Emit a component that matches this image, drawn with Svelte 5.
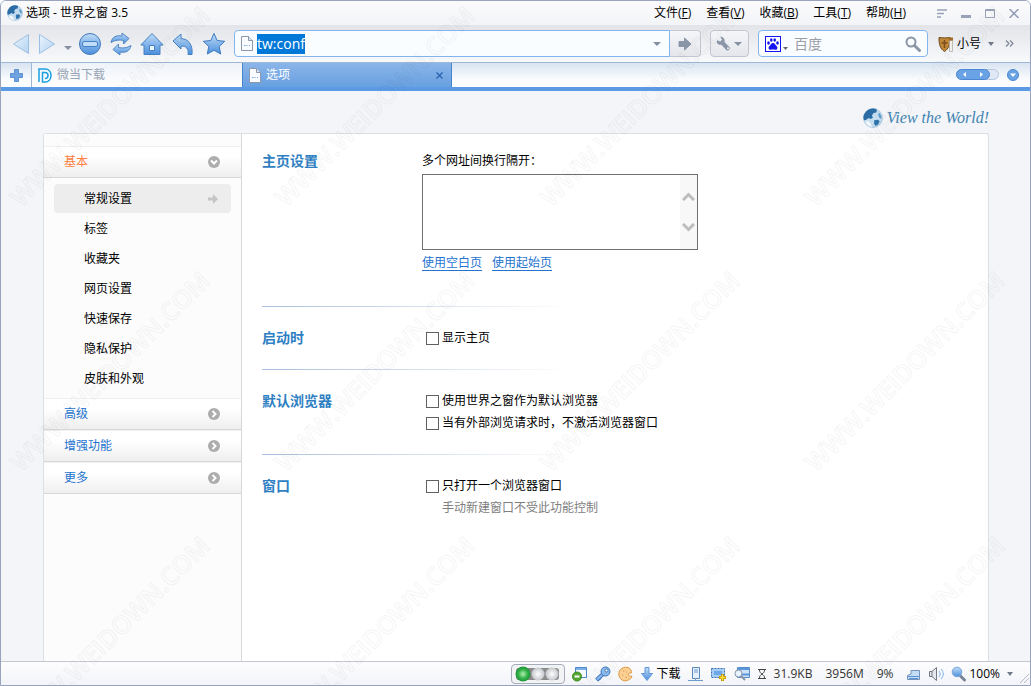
<script>
  import { onMount } from 'svelte';

  const menus = [
    ['文件', 'F'],
    ['查看', 'V'],
    ['收藏', 'B'],
    ['工具', 'T'],
    ['帮助', 'H']
  ];

  const pages = ['常规设置', '标签', '收藏夹', '网页设置', '快速保存', '隐私保护', '皮肤和外观'];
  const groups = ['高级', '增强功能', '更多'];

  let current = $state('常规设置');
  let url = $state('tw:conf');
  let keyword = $state('');
  let homepages = $state('');
  let showHome = $state(false);
  let isDefault = $state(false);
  let keepInactive = $state(false);
  let singleWindow = $state(false);

  let address;

  onMount(() => {
    address.focus();
    address.select();
  });
</script>

{#snippet globe(size)}
  <svg width={size} height={size} viewBox="0 0 18 18" aria-hidden="true">
    <circle cx="9" cy="9" r="8.500" fill="#c3dcee" stroke="#8db4d2" stroke-width=".5" />
    <path d="M1.500 5C4 0 10-.5 12.500 1.500L12 4l-2.500.5L8 7l1 1.500-2 1.500-2-1-2 1.500L.8 11C0 8 .5 6.500 1.500 5z" fill="#2c6ca5" />
    <path d="M10 11l3.500-.5 1.500 1.500-1.500 3-2.500 1-1-2z" fill="#2f74ad" />
    <path d="M14.500 4l2 3v3l-2-1.500-.8-2.500z" fill="#5e9bc8" />
    <path d="M2 12c1 3 3 4.500 6 5l-1-3-2-2z" fill="#f4f9fd" />
  </svg>
{/snippet}

{#snippet page()}
  <svg width="12" height="15" viewBox="0 0 12 15" aria-hidden="true">
    <path d="M.5.5h7l4 4v10H.5z" fill="#fafcff" stroke="#8b97ad" />
    <path d="M7.500.5v4h4" fill="#dde5f0" stroke="#8b97ad" />
    <path d="M3 9.500h1.500M5.500 9.500h1M8 9.500h1" stroke="#6f9fd8" />
  </svg>
{/snippet}

{#snippet caret()}
  <svg width="8" height="4" viewBox="0 0 8 4" aria-hidden="true"><path d="M0 0h8L4 4z" fill="#8590a3" /></svg>
{/snippet}

<div class="window">
  <svg class="defs" width="0" height="0" aria-hidden="true">
    <defs>
      <linearGradient id="blue" x1="0" y1="0" x2="0" y2="1">
        <stop offset="0" stop-color="#bfdcf8" />
        <stop offset="1" stop-color="#4b8fdc" />
      </linearGradient>
      <linearGradient id="pale" x1="0" y1="0" x2="1" y2="1">
        <stop offset="0" stop-color="#eaf4fd" />
        <stop offset="1" stop-color="#b3d3f1" />
      </linearGradient>
      <radialGradient id="green">
        <stop offset="0" stop-color="#b0f0ae" />
        <stop offset="0.600" stop-color="#35b34a" />
        <stop offset="1" stop-color="#1f9438" />
      </radialGradient>
      <radialGradient id="silver">
        <stop offset="0" stop-color="#fff" />
        <stop offset="1" stop-color="#c3c6cc" />
      </radialGradient>
    </defs>
  </svg>

  <header class="titlebar">
    {@render globe(16)}
    <span class="title">选项 - 世界之窗 3.5</span>
    <nav class="menus">
      {#each menus as [name, key]}
        <button>{name}(<u>{key}</u>)</button>
      {/each}
    </nav>
    <div class="controls">
      <button aria-label="菜单">
        <svg width="10" height="9" viewBox="0 0 10 9"><path d="M0 1h10M0 4.500h7M0 8h4" stroke="#98a3b8" stroke-width="1.500" /></svg>
      </button>
      <button aria-label="最小化">
        <svg width="10" height="9" viewBox="0 0 10 9"><path d="M0 7.500h10" stroke="#98a3b8" stroke-width="3" /></svg>
      </button>
      <button aria-label="最大化">
        <svg width="10" height="9" viewBox="0 0 10 9"><path d="M.5.5h9v8h-9zM.5 1.500h9" fill="none" stroke="#98a3b8" /></svg>
      </button>
      <button aria-label="关闭">
        <svg width="10" height="9" viewBox="0 0 10 9"><path d="M.5 0l9 9M9.500 0l-9 9" stroke="#8f9bb2" stroke-width="1.500" /></svg>
      </button>
    </div>
  </header>

  <div class="toolbar">
    <div class="history">
      <button aria-label="后退">
        <svg width="18" height="22" viewBox="0 0 18 22"><path d="M16.500 1.500v19L1.500 11z" fill="url(#pale)" stroke="#9bbfe2" stroke-linejoin="round" /></svg>
      </button>
      <button aria-label="前进">
        <svg width="18" height="22" viewBox="0 0 18 22"><path d="M1.500 1.500v19l15-9.500z" fill="url(#pale)" stroke="#9bbfe2" stroke-linejoin="round" /></svg>
      </button>
      <button class="recent" aria-label="历史">{@render caret()}</button>
    </div>
    <div class="actions">
      <button aria-label="停止">
        <svg width="24" height="24" viewBox="0 0 24 24">
          <circle cx="12" cy="12" r="10.500" fill="url(#blue)" stroke="#4078b8" />
          <rect x="4.500" y="9.500" width="15" height="5" rx="1.500" fill="#bfdcf8" stroke="#4580c4" />
        </svg>
      </button>
      <button aria-label="刷新">
        <svg width="24" height="24" viewBox="0 0 24 24" fill="url(#blue)" stroke="#5187c4" stroke-linejoin="round">
          <path d="M2 10.500C3 4.500 8 3 13 4V1l7 5.500-5.500 5.500V8.500C10 7.500 6 8 2 10.500z" />
          <path d="M22 13.500c-1 6-6 7.500-11 6.500v3l-7-5.500L9.500 12v3.500c4.500 1 8.500.5 12.500-2z" />
        </svg>
      </button>
      <button aria-label="主页">
        <svg width="24" height="24" viewBox="0 0 24 24" fill="url(#blue)" stroke="#4580c4" stroke-linejoin="round">
          <path d="M12 1.500L.8 13H4v9.500h16V13h3.200z" />
          <rect x="9.500" y="13.500" width="5" height="5" fill="#eff7ff" />
        </svg>
      </button>
      <button aria-label="撤销">
        <svg width="24" height="24" viewBox="0 0 24 24">
          <path d="M2 9l8-7v4.500c8 .5 12 7 11 16h-4c1-6-2-8.500-7-8.500v3z" fill="url(#blue)" stroke="#4580c4" stroke-linejoin="round" />
        </svg>
      </button>
      <button aria-label="收藏">
        <svg width="24" height="24" viewBox="0 0 24 24">
          <path d="M12 1.500l3.200 7 7.500.8-5.500 5.200 1.500 7.500L12 18.300 5.300 22l1.500-7.500L1.300 9.300l7.500-.8z" fill="url(#blue)" stroke="#3f7ac0" stroke-linejoin="round" />
        </svg>
      </button>
    </div>

    <div class="address">
      {@render page()}
      <input type="text" aria-label="地址" bind:value={url} bind:this={address} spellcheck="false" />
      <button aria-label="地址列表">{@render caret()}</button>
    </div>
    <button class="go" aria-label="转到">
      <svg width="14" height="14" viewBox="0 0 14 14"><path d="M1 4.500h5.500V1L13 7l-6.500 6V9.500H1z" fill="#8b95a8" stroke="#8b95a8" stroke-linejoin="round" /></svg>
    </button>
    <button class="tools" aria-label="工具">
      <svg width="15" height="15" viewBox="0 0 15 15">
        <path d="M4.200.8L6 3.600 4.300 5.400 1 4.200C0 7.200 2.300 9.600 5.400 8.800l5 5.400c1.800 1 4-1 3.300-2.900L8.500 6C9.300 3 7.200.5 4.200.8z" fill="#8b95a8" />
        <circle cx="12" cy="12.300" r="1" fill="#f0f1f4" />
      </svg>
      {@render caret()}
    </button>

    <div class="search">
      <svg width="16" height="16" viewBox="0 0 16 16" aria-hidden="true">
        <rect x=".5" y=".5" width="15" height="15" fill="#fff" stroke="#1414f0" />
        <g fill="#1414f0">
          <ellipse cx="3.500" cy="7" rx="1.300" ry="1.800" />
          <ellipse cx="6.300" cy="4" rx="1.300" ry="1.800" />
          <ellipse cx="9.700" cy="4" rx="1.300" ry="1.800" />
          <ellipse cx="12.500" cy="7" rx="1.300" ry="1.800" />
          <path d="M8 7c2 0 2.300 2 3.700 3.200 1.500 1.500.5 3.600-1.200 3.500-1.500-.2-3.500-.2-5 0-1.800 0-2.700-2-1.200-3.500C5.700 9 6 7 8 7z" />
        </g>
      </svg>
      <svg class="engine" width="5" height="3" viewBox="0 0 5 3" aria-hidden="true"><path d="M0 0h5L2.500 3z" fill="#667" /></svg>
      <input type="text" aria-label="搜索" placeholder="百度" bind:value={keyword} />
      <button aria-label="搜索">
        <svg width="16" height="16" viewBox="0 0 16 16"><circle cx="6" cy="6" r="4.500" fill="none" stroke="#8b95a8" stroke-width="2" /><path d="M9.500 9.500l5 5" stroke="#8b95a8" stroke-width="3" stroke-linecap="round" /></svg>
      </button>
    </div>

    <button class="alt">
      <svg width="16" height="18" viewBox="0 0 16 18" aria-hidden="true">
        <path d="M1 2.500c4 .5 7 .5 11 0 0 7-1 11-5.500 14C2 13.500 1 9.500 1 2.500z" fill="#c08838" stroke="#6d4a1e" />
        <path d="M6.500 5v8M3.500 8h6" stroke="#7a4e18" stroke-width="1.500" />
        <path d="M11.500 5.500h3v11h-3z" fill="#f1efea" stroke="#a8a69e" stroke-width=".7" />
        <path d="M10 2.500h5v3h-3.500z" fill="#a06a28" />
      </svg>
      <span>小号</span>
      <svg width="6" height="4" viewBox="0 0 6 4" aria-hidden="true"><path d="M0 0h6L3 4z" fill="#70788a" /></svg>
    </button>
    <button class="more" aria-label="更多">
      <svg width="9" height="7" viewBox="0 0 9 7"><path d="M1 .5l3 3-3 3M5 .5l3 3-3 3" fill="none" stroke="#7d8698" stroke-width="1.200" /></svg>
    </button>
  </div>

  <div class="tabs">
    <button class="new-tab" aria-label="新建标签">
      <svg width="13" height="13" viewBox="0 0 13 13"><path d="M4.500.5h4v4h4v4h-4v4h-4v-4h-4v-4h4z" fill="#6fa3e0" stroke="#5b90d2" stroke-linejoin="round" /></svg>
    </button>
    <div class="tab">
      <button class="tab-name">
        <svg width="14" height="15" viewBox="0 0 14 15" aria-hidden="true"><path d="M1 14V1h6c8 0 8 13 0 13H4.500V4.500H7c4 0 4 6 0 6" fill="none" stroke="#1ba0e0" stroke-width="1.500" /></svg>
        <span>微当下载</span>
      </button>
    </div>
    <div class="tab active">
      <button class="tab-name">
        {@render page()}
        <span>选项</span>
      </button>
      <button class="close" aria-label="关闭标签">
        <svg width="7" height="7" viewBox="0 0 7 7"><path d="M.5.5l6 6M6.500.5l-6 6" stroke="#2b62b0" stroke-width="1.300" /></svg>
      </button>
    </div>
    <div class="tab-tools">
      <button aria-label="滚动标签">
        <svg width="43" height="12" viewBox="0 0 43 12">
          <rect x=".5" y=".5" width="42" height="10" rx="5" fill="#dfe8f4" stroke="#b4c6de" />
          <rect x=".5" y=".5" width="33" height="10" rx="5" fill="#69a3e6" stroke="#4c88d0" />
          <path d="M10 3v5L7 5.500zM24 3v5l3-2.500z" fill="#fff" />
        </svg>
      </button>
      <button aria-label="标签列表">
        <svg width="12" height="12" viewBox="0 0 12 12"><circle cx="6" cy="6" r="5.500" fill="#69a3e6" stroke="#4c88d0" /><path d="M3 4.500h6L6 8z" fill="#fff" /></svg>
      </button>
    </div>
  </div>

  <main class="content">
    <div class="brand">
      {@render globe(20)}
      <span>View the World!</span>
    </div>

    <div class="panel">
      <aside class="sidebar">
        <button class="group open">
          基本
          <svg width="12" height="12" viewBox="0 0 12 12"><circle cx="6" cy="6" r="6" fill="#adadad" /><path d="M3 4.500l3 3 3-3" fill="none" stroke="#fff" stroke-width="2" /></svg>
        </button>
        <ul>
          {#each pages as name}
            <li>
              <button class:selected={current === name} onclick={() => (current = name)}>
                {name}
                {#if current === name}
                  <svg width="10" height="10" viewBox="0 0 10 10"><path d="M0 3.500h5V0l5 5-5 5V6.500H0z" fill="#c4c4c4" /></svg>
                {/if}
              </button>
            </li>
          {/each}
        </ul>
        {#each groups as name}
          <button class="group">
            {name}
            <svg width="12" height="12" viewBox="0 0 12 12"><circle cx="6" cy="6" r="6" fill="#adadad" /><path d="M4.500 3l3 3-3 3" fill="none" stroke="#fff" stroke-width="2" /></svg>
          </button>
        {/each}
      </aside>

      <div class="settings">
        <section>
          <h2>主页设置</h2>
          <div class="fields home">
            <label for="homepages">多个网址间换行隔开：</label>
            <div class="textbox">
              <textarea id="homepages" bind:value={homepages}></textarea>
              <div class="scroll">
                <svg width="13" height="9" viewBox="0 0 13 9" aria-hidden="true"><path d="M1 8l5.500-5.500L12 8" fill="none" stroke="#bdbdbd" stroke-width="3" /></svg>
                <svg width="13" height="9" viewBox="0 0 13 9" aria-hidden="true"><path d="M1 1l5.500 5.500L12 1" fill="none" stroke="#bdbdbd" stroke-width="3" /></svg>
              </div>
            </div>
            <div class="links">
              <a href="#blank">使用空白页</a>
              <a href="#start">使用起始页</a>
            </div>
          </div>
        </section>

        <section>
          <h2>启动时</h2>
          <div class="fields">
            <label class="check"><input type="checkbox" bind:checked={showHome} />显示主页</label>
          </div>
        </section>

        <section>
          <h2>默认浏览器</h2>
          <div class="fields">
            <label class="check"><input type="checkbox" bind:checked={isDefault} />使用世界之窗作为默认浏览器</label>
            <label class="check"><input type="checkbox" bind:checked={keepInactive} />当有外部浏览请求时，不激活浏览器窗口</label>
          </div>
        </section>

        <section>
          <h2>窗口</h2>
          <div class="fields">
            <label class="check"><input type="checkbox" bind:checked={singleWindow} />只打开一个浏览器窗口</label>
            <p class="hint">手动新建窗口不受此功能控制</p>
          </div>
        </section>
      </div>
    </div>
  </main>

  <footer class="statusbar">
    <button class="lights" aria-label="过滤">
      <svg width="47" height="16" viewBox="0 0 47 16">
        <rect x="2" y="2" width="43" height="12" rx="3" fill="#8a8a8a" />
        <circle cx="9" cy="8" r="7.500" fill="url(#green)" />
        <circle cx="24" cy="8" r="6.500" fill="url(#silver)" />
        <circle cx="38" cy="8" r="6.500" fill="url(#silver)" />
      </svg>
    </button>
    <button aria-label="拦截窗口">
      <svg width="16" height="16" viewBox="0 0 16 16">
        <path d="M3.500 1.500h11v10h-11z" fill="#f4f9ff" stroke="#4e86c6" /><path d="M4 3h10" stroke="#7eb0e8" stroke-width="2" />
        <circle cx="5" cy="10.500" r="4.500" fill="#54a832" stroke="#3b8620" /><path d="M2.500 10.500h5" stroke="#fff" stroke-width="2" />
      </svg>
    </button>
    <button aria-label="密码">
      <svg width="16" height="16" viewBox="0 0 16 16">
        <path d="M8 8l-6.500 6M3.500 12l1.500 2" stroke="#4078be" stroke-width="4" /><path d="M8.500 7.500L2 13.500" stroke="#8dbcf0" stroke-width="2" />
        <circle cx="10.500" cy="5.500" r="4.500" fill="#8dbcf0" stroke="#4078be" /><circle cx="11.500" cy="4.500" r="1.500" fill="#fff" stroke="#4078be" />
      </svg>
    </button>
    <button aria-label="Cookie">
      <svg width="15" height="16" viewBox="0 0 15 16">
        <path d="M11 2C6-.5.800 3 .8 8s5 8.500 9.500 6c2-1 3.700-2 3.500-4-2 .5-3.800-.3-3.500-1.800.2-1.200 1.500-1.200 3-1.200C13.500 4 12.500 3 11 2z" fill="#fbd092" stroke="#dc9440" />
        <path d="M5 5h1.500M4 9h1.500M8 6h1M7.500 11.500H9" stroke="#dc9a50" />
      </svg>
    </button>
    <button class="download">
      <svg width="14" height="16" viewBox="0 0 14 16" aria-hidden="true"><path d="M5 1.500h4v6h3.500L7 14.500 1.500 7.500H5z" fill="url(#blue)" stroke="#6397d8" stroke-linejoin="round" /></svg>
      下载
    </button>
    <button aria-label="代理">
      <svg width="15" height="16" viewBox="0 0 15 16">
        <path d="M4.500 1.500h7v11h-7z" fill="#e6f1fc" stroke="#5b88ba" /><path d="M6 4h4M6 6h4M0 14.500h15M7.500 12v3" stroke="#6d9cd0" />
      </svg>
    </button>
    <button aria-label="截图">
      <svg width="17" height="16" viewBox="0 0 17 16">
        <path d="M1.500 2.500h13v9h-13z" fill="#a5cdf5" stroke="#3c73b5" stroke-dasharray="2 1" /><path d="M4 5h8v4H4z" fill="#6ba8ea" />
        <path d="M12.500 8v7M9 11.500h7" stroke="#b58a00" stroke-width="3" /><path d="M12.500 8.500v6M9.500 11.500h6" stroke="#ffdf3c" stroke-width="1.500" />
      </svg>
    </button>
    <button aria-label="页面搜索">
      <svg width="16" height="16" viewBox="0 0 16 16">
        <path d="M3.500 1.500h12v10h-12z" fill="#cfe3f8" stroke="#5b8ec8" /><path d="M4 3h11M8 8.500h7" stroke="#5a96dc" stroke-width="2" />
        <circle cx="4.500" cy="7.500" r="3.500" fill="#e9f4ff" stroke="#8694a8" /><path d="M7 10l4 4" stroke="#8694a8" stroke-width="2" />
      </svg>
    </button>
    <svg width="10" height="12" viewBox="0 0 10 12" aria-hidden="true"><path d="M1 1.500h8M1 10.500h8M2.500 2c0 2 1 3 2.500 4-1.500 1-2.500 2-2.500 4M7.500 2c0 2-1 3-2.500 4 1.500 1 2.500 2 2.500 4" fill="none" stroke="#444" /></svg>
    <span class="stat">31.9KB</span>
    <span class="stat">3956M</span>
    <span class="stat">9%</span>
    <button aria-label="磁盘">
      <svg width="15" height="16" viewBox="0 0 15 16"><path d="M1.500 9.500L5 8V4.500h8.500v9h-12z" fill="#c3ddf6" stroke="#7393ba" stroke-linejoin="round" /><path d="M2 10.500h11M3 12.500h9" stroke="#5d93d4" /></svg>
    </button>
    <button aria-label="声音">
      <svg width="16" height="16" viewBox="0 0 16 16"><path d="M1.500 5.500H4l4.500-4v13l-4.500-4H1.500zM4 5.500v5" fill="#e6e8ec" stroke="#727884" /><path d="M11 5c1.500 2 1.500 4 0 6M13 3c3 3 3 7 0 10" fill="none" stroke="#7fb0e8" /></svg>
    </button>
    <button class="zoom">
      <svg width="15" height="16" viewBox="0 0 15 16" aria-hidden="true"><path d="M9 9.500l4.500 4.500" stroke="#7a8596" stroke-width="3" stroke-linecap="round" /><circle cx="6" cy="6" r="4.800" fill="url(#blue)" stroke="#7ba6d8" /></svg>
      <span>100%</span>
      <svg width="6" height="4" viewBox="0 0 6 4" aria-hidden="true"><path d="M0 0h6L3 4z" fill="#70788a" /></svg>
    </button>
    <svg class="grip" width="9" height="9" viewBox="0 0 9 9" aria-hidden="true"><path d="M0 9l9-9M4 9l5-5" stroke="#b6bcc8" /></svg>
  </footer>

  <svg class="watermark" width="100%" height="100%" aria-hidden="true">
    <defs>
      <pattern id="mark" width="265" height="265" patternUnits="userSpaceOnUse">
        <text transform="translate(20 207) rotate(-45)">WWW.WEIDOWN.COM</text>
      </pattern>
    </defs>
    <rect width="100%" height="100%" fill="url(#mark)" />
  </svg>
</div>

<style>
  :global(body) {
    margin: 0;
    background: #fff;
  }

  .window {
    position: relative;
    box-sizing: border-box;
    min-height: 100vh;
    display: flex;
    flex-direction: column;
    overflow: hidden;
    border: 1px solid #98a3bd;
    border-radius: 6px 6px 0 0;
    background: #f3f5f8;
    color: #000;
    font-family: 'Open Sans', 'Noto Sans CJK SC', sans-serif;
    font-size: 12px;
    line-height: 22px;
  }

  .defs {
    position: absolute;
  }

  svg {
    display: block;
    flex: none;
  }

  button {
    display: flex;
    align-items: center;
    justify-content: center;
    padding: 0;
    border: none;
    background: none;
    color: inherit;
    font: inherit;
    white-space: nowrap;
    cursor: pointer;
  }

  input,
  textarea {
    min-width: 0;
    margin: 0;
    padding: 0;
    border: none;
    outline: none;
    background: none;
    color: inherit;
    font: inherit;
  }

  /* title bar */
  .titlebar {
    display: flex;
    align-items: center;
    height: 24px;
    padding: 0 4px 0 6px;
    background: linear-gradient(#fbfbfd, #f3f4f7);
  }

  .title {
    margin-left: 3px;
    white-space: nowrap;
  }

  .menus {
    display: flex;
    gap: 15px;
    margin-left: auto;
  }

  .controls {
    display: flex;
    margin-left: 24px;
  }

  .controls button {
    width: 24px;
    height: 22px;
  }

  /* toolbar */
  .toolbar {
    display: flex;
    align-items: center;
    height: 37px;
    padding: 0 16px 0 11px;
    background: linear-gradient(#e2e4e9, #f8f9fb);
  }

  .history,
  .actions {
    display: flex;
    align-items: center;
  }

  .history {
    gap: 8px;
  }

  .recent {
    height: 24px;
    padding-top: 8px;
  }

  .actions {
    gap: 7px;
    margin: 0 8px 0 6px;
  }

  .address,
  .search {
    display: flex;
    align-items: center;
    box-sizing: border-box;
    height: 27px;
    border: 1px solid #82b4f0;
    background: #fafdff;
  }

  .address {
    flex: 1;
    min-width: 0;
    padding-left: 6px;
    border-radius: 4px 0 0 4px;
  }

  .address input {
    flex: 1;
    margin-left: 4px;
    font-size: 14px;
    line-height: 20px;
  }

  .address input::selection {
    background: #0078d7;
    color: #fff;
  }

  .address button {
    width: 24px;
    height: 24px;
  }

  .go,
  .tools {
    box-sizing: border-box;
    height: 27px;
    border: 1px solid #c2c6d0;
    border-radius: 4px;
    background: linear-gradient(#f5f6f8, #e4e6eb);
  }

  .go {
    width: 31px;
    border-left: none;
    border-radius: 0 4px 4px 0;
  }

  .tools {
    gap: 3px;
    width: 39px;
    margin: 0 9px;
  }

  .search {
    width: 170px;
    padding: 0 6px;
    border-radius: 4px;
  }

  .engine {
    margin: 10px 6px 0 2px;
  }

  .search input {
    flex: 1;
    font-size: 14px;
    line-height: 22px;
  }

  .search input::placeholder {
    color: #9b9ea6;
    opacity: 1;
  }

  .alt {
    margin-left: 10px;
  }

  .alt span {
    margin: 0 7px 0 3px;
  }

  .more {
    margin-left: 11px;
  }

  /* tabs */
  .tabs {
    display: flex;
    height: 24px;
    border-top: 1px solid #9db7d6;
    background: linear-gradient(#d9e4f1, #fafcfe 70%);
  }

  .tabs::after {
    content: '';
    position: absolute;
  }

  .new-tab {
    width: 31px;
    border-right: 1px solid #9db7d6;
  }

  .tab {
    display: flex;
    box-sizing: border-box;
    flex: 0 1 210px;
    min-width: 0;
    background: linear-gradient(#eef3f8, #fff);
    color: #98a5b5;
  }

  .tab.active {
    border: 1px solid #4583cb;
    border-width: 0 1px;
    background: linear-gradient(#8ab5e9, #68a0e0);
    color: #fff;
  }

  .tab-name {
    flex: 1;
    justify-content: flex-start;
    gap: 5px;
    padding-left: 6px;
  }

  .close {
    width: 24px;
  }

  .tab-tools {
    display: flex;
    gap: 8px;
    margin-left: auto;
    padding-right: 11px;
  }

  /* content */
  .content {
    flex: 1;
    display: flex;
    flex-direction: column;
    padding: 0 41px 0 42px;
    border-top: 4px solid #5b9be6;
  }

  .brand {
    display: flex;
    align-items: center;
    justify-content: flex-end;
    gap: 4px;
    height: 42px;
    box-sizing: border-box;
    padding-top: 12px;
    color: #3f83b1;
    font-family: 'Liberation Serif', serif;
    font-size: 16px;
    font-style: italic;
  }

  .panel {
    flex: 1;
    display: flex;
    border: 1px solid #dcdfe3;
    border-bottom: none;
    border-radius: 3px 3px 0 0;
    background: #fff;
  }

  .sidebar {
    width: 197px;
    padding-top: 12px;
    border-right: 1px solid #d8d8d8;
    background: #fcfcfc;
  }

  .group {
    justify-content: space-between;
    box-sizing: border-box;
    width: 100%;
    height: 32px;
    padding: 0 21px 0 20px;
    border-top: 1px solid #f0f0f0;
    border-bottom: 1px solid #d8d8d8;
    background: linear-gradient(#fff 30%, #efefef);
    color: #2573cf;
  }

  .group.open {
    color: #ff7f3f;
  }

  ul {
    margin: 0;
    padding: 6px 10px 4px;
    list-style: none;
  }

  li {
    height: 30px;
  }

  li button {
    justify-content: space-between;
    box-sizing: border-box;
    width: 100%;
    height: 29px;
    padding: 0 13px 0 30px;
    border-radius: 4px;
  }

  li .selected {
    background: #ededed;
  }

  .settings {
    flex: 1;
    min-width: 0;
    padding: 16px 20px 20px;
  }

  section {
    display: grid;
    grid-template-columns: 160px 1fr;
    padding-bottom: 20px;
  }

  section + section {
    padding-top: 21px;
    background: linear-gradient(90deg, #a9bedb, #fff) no-repeat 0 0 / 310px 1px;
  }

  h2 {
    margin: 0;
    color: #2f7fc3;
    font-size: 14px;
    line-height: 22px;
  }

  .home {
    padding-bottom: 15px;
  }

  .textbox {
    display: flex;
    box-sizing: border-box;
    max-width: 276px;
    height: 76px;
    margin: 2px 0;
    border: 1px solid #707070;
    background: #fff;
  }

  textarea {
    flex: 1;
    resize: none;
    overflow: hidden;
  }

  .scroll {
    display: flex;
    flex-direction: column;
    align-items: center;
    justify-content: center;
    gap: 22px;
    width: 17px;
    background: #f8f8f8;
  }

  .links {
    display: flex;
    gap: 10px;
  }

  .links a {
    height: 18px;
    border-bottom: 1px solid #2573cf;
    color: #2573cf;
    text-decoration: none;
  }

  .check {
    display: flex;
    align-items: center;
    gap: 3px;
    padding-left: 4px;
  }

  .check input {
    appearance: none;
    box-sizing: border-box;
    width: 13px;
    height: 13px;
    border: 1px solid #606060;
    background: #fff;
  }

  .check input:checked {
    box-shadow: inset 0 0 0 2px #fff;
    background: #2573cf;
  }

  .hint {
    margin: 0;
    padding-left: 20px;
    color: #808080;
  }

  /* status bar */
  .statusbar {
    display: flex;
    align-items: center;
    justify-content: flex-end;
    gap: 7px;
    height: 23px;
    padding-right: 1px;
    border-top: 1px solid #c3c7d2;
    background: linear-gradient(#fdfdfe, #f3f4f8);
  }

  .lights {
    box-sizing: border-box;
    width: 54px;
    height: 20px;
    border: 1px solid #a6adb9;
    border-radius: 4px;
    background: #f2f3f5;
  }

  .download {
    gap: 3px;
  }

  .stat {
    margin-right: 6px;
    color: #333;
  }

  .zoom span {
    margin: 0 7px 0 3px;
  }

  .grip {
    align-self: flex-end;
    margin-bottom: 2px;
  }

  .watermark {
    position: absolute;
    inset: 0;
    pointer-events: none;
  }

  .watermark text {
    fill: none;
    stroke: #000;
    stroke-opacity: 0.04;
    font-family: 'Open Sans', sans-serif;
    font-size: 25px;
    font-weight: 600;
  }
</style>
